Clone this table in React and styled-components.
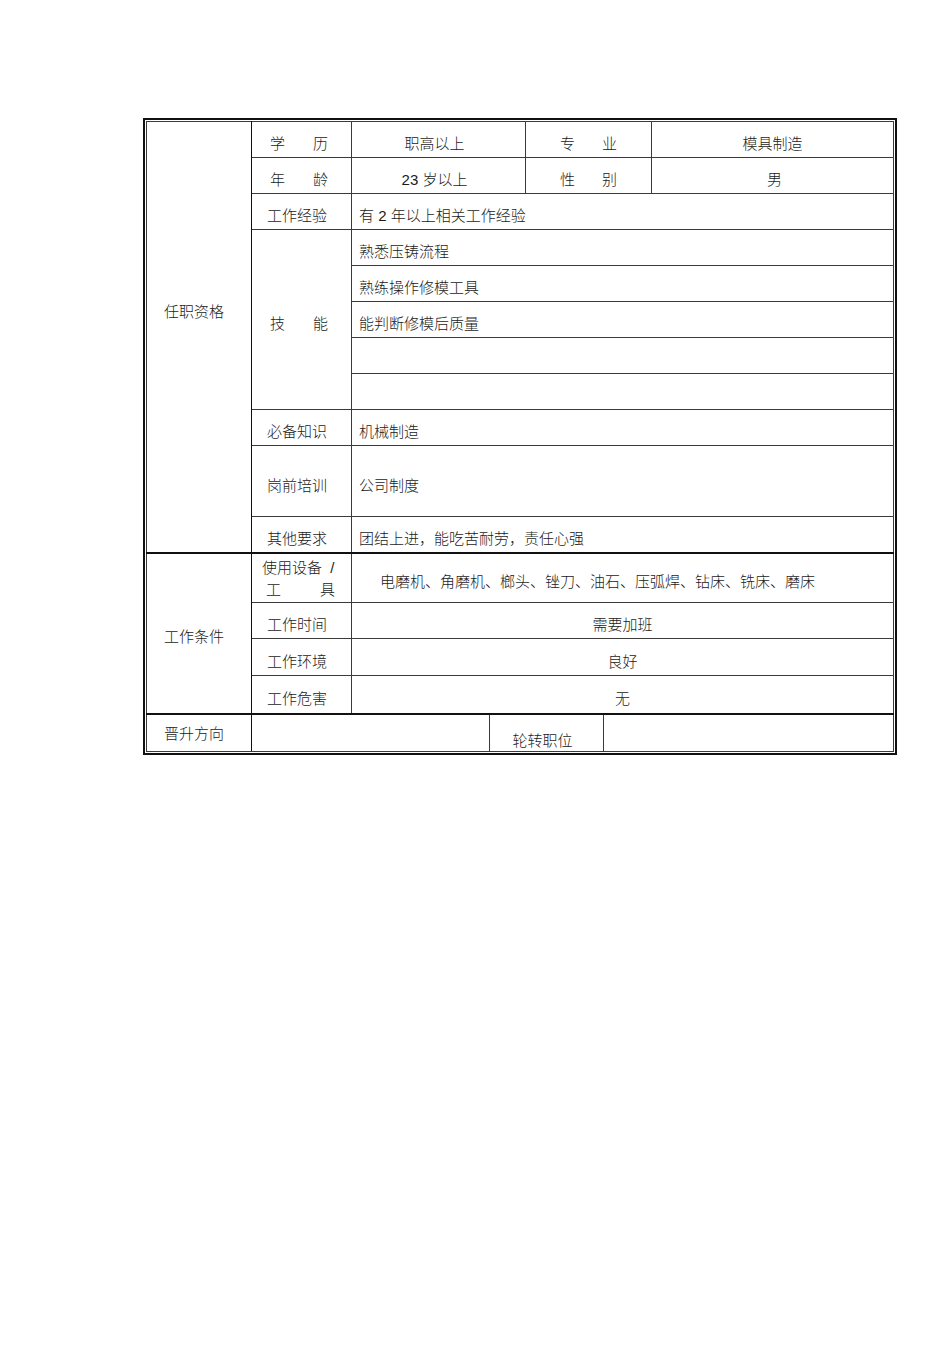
import React from "react";
import styled, { createGlobalStyle } from "styled-components";

const GlobalStyle = createGlobalStyle`
  body {
    margin: 0;
    background: #fff;
    color: #1a1a1a;
    font-family: "Liberation Sans", "Noto Sans CJK SC", sans-serif;
  }
`;

const Page = styled.div`
  padding: 118px 0 0 143px;
`;

const Frame = styled.div`
  display: inline-block;
  border: 2px solid #111;
  padding: 1px;
`;

const Table = styled.table`
  border-collapse: collapse;
  table-layout: fixed;
  width: 747px;
  font-size: 15px;
  font-weight: 300;
  line-height: 18px;
`;

const Row = styled.tr`
  height: ${(p) => p.$h || 36}px;

  & > td {
    border-top: ${(p) => (p.$thick ? "2px solid #111" : "1px solid #3a3a3a")};
  }
`;

const Cell = styled.td`
  border: 1px solid #3a3a3a;
  padding: ${(p) => p.$pad || "9px 0 0 7px"};
  text-align: ${(p) => p.$align || "left"};
  vertical-align: ${(p) => p.$valign || "middle"};
  white-space: nowrap;
`;

const Head = styled(Cell)`
  padding: ${(p) => p.$pad || "8px 0 0 17px"};
  border-right: 1px solid #111;
`;

const Label = styled(Cell)`
  padding: 9px 0 0 15px;
`;

const Spread = styled.span`
  display: flex;
  justify-content: space-between;
  width: ${(p) => p.$w || 58}px;
  margin: ${(p) => p.$m || "0 0 0 3px"};
`;

const Stack = styled.div`
  display: flex;
  flex-direction: column;
  gap: 4px;
  margin: -6px 0 0 -5px;
`;

const Pair = ({ a, b, ...rest }) => (
  <Spread {...rest}>
    <span>{a}</span>
    <span>{b}</span>
  </Spread>
);

const skills = ["熟悉压铸流程", "熟练操作修模工具", "能判断修模后质量", "", ""];

export default function App() {
  return (
    <Page>
      <GlobalStyle />
      <Frame>
        <Table>
          <colgroup>
            <col style={{ width: 105 }} />
            <col style={{ width: 100 }} />
            <col style={{ width: 138 }} />
            <col style={{ width: 36 }} />
            <col style={{ width: 78 }} />
            <col style={{ width: 48 }} />
            <col style={{ width: 242 }} />
          </colgroup>
          <tbody>
            <Row>
              <Head rowSpan={11} $pad="0 0 50px 17px">
                任职资格
              </Head>
              <Label>
                <Pair a="学" b="历" />
              </Label>
              <Cell colSpan={2} $align="center" $pad="9px 8px 0 0">
                职高以上
              </Cell>
              <Cell colSpan={2} $pad="9px 0 0 0">
                <Pair a="专" b="业" $m="0 auto" $w={57} />
              </Cell>
              <Cell $align="center" $pad="9px 0 0 0">
                模具制造
              </Cell>
            </Row>
            <Row>
              <Label>
                <Pair a="年" b="龄" />
              </Label>
              <Cell colSpan={2} $align="center" $pad="9px 8px 0 0">
                23 岁以上
              </Cell>
              <Cell colSpan={2} $pad="9px 0 0 0">
                <Pair a="性" b="别" $m="0 auto" $w={57} />
              </Cell>
              <Cell $align="center" $pad="9px 0 0 4px">
                男
              </Cell>
            </Row>
            <Row>
              <Label>工作经验</Label>
              <Cell colSpan={5}>有 2 年以上相关工作经验</Cell>
            </Row>
            {skills.map((s, i) => (
              <Row key={i}>
                {i === 0 && (
                  <Label rowSpan={5}>
                    <Pair a="技" b="能" />
                  </Label>
                )}
                <Cell colSpan={5}>{s}</Cell>
              </Row>
            ))}
            <Row>
              <Label>必备知识</Label>
              <Cell colSpan={5}>机械制造</Cell>
            </Row>
            <Row $h={71}>
              <Label>岗前培训</Label>
              <Cell colSpan={5}>公司制度</Cell>
            </Row>
            <Row>
              <Label>其他要求</Label>
              <Cell colSpan={5}>团结上进，能吃苦耐劳，责任心强</Cell>
            </Row>
            <Row $h={50} $thick>
              <Head rowSpan={4}>工作条件</Head>
              <Label>
                <Stack>
                  <span>使用设备&nbsp;&nbsp;/</span>
                  <Pair a="工" b="具" $w={69} $m="0 0 0 4px" />
                </Stack>
              </Label>
              <Cell colSpan={5} $pad="9px 0 0 28px">
                电磨机、角磨机、榔头、锉刀、油石、压弧焊、钻床、铣床、磨床
              </Cell>
            </Row>
            <Row>
              <Label>工作时间</Label>
              <Cell colSpan={5} $align="center" $pad="9px 0 0 0">
                需要加班
              </Cell>
            </Row>
            <Row $h={37}>
              <Label>工作环境</Label>
              <Cell colSpan={5} $align="center" $pad="9px 0 0 0">
                良好
              </Cell>
            </Row>
            <Row $h={38}>
              <Label>工作危害</Label>
              <Cell colSpan={5} $align="center" $pad="9px 0 0 0">
                无
              </Cell>
            </Row>
            <Row $h={38} $thick>
              <Head $pad="3px 0 0 17px">晋升方向</Head>
              <Cell colSpan={2} />
              <Cell colSpan={2} $align="center" $pad="16px 8px 0 0">
                轮转职位
              </Cell>
              <Cell colSpan={2} />
            </Row>
          </tbody>
        </Table>
      </Frame>
    </Page>
  );
}
